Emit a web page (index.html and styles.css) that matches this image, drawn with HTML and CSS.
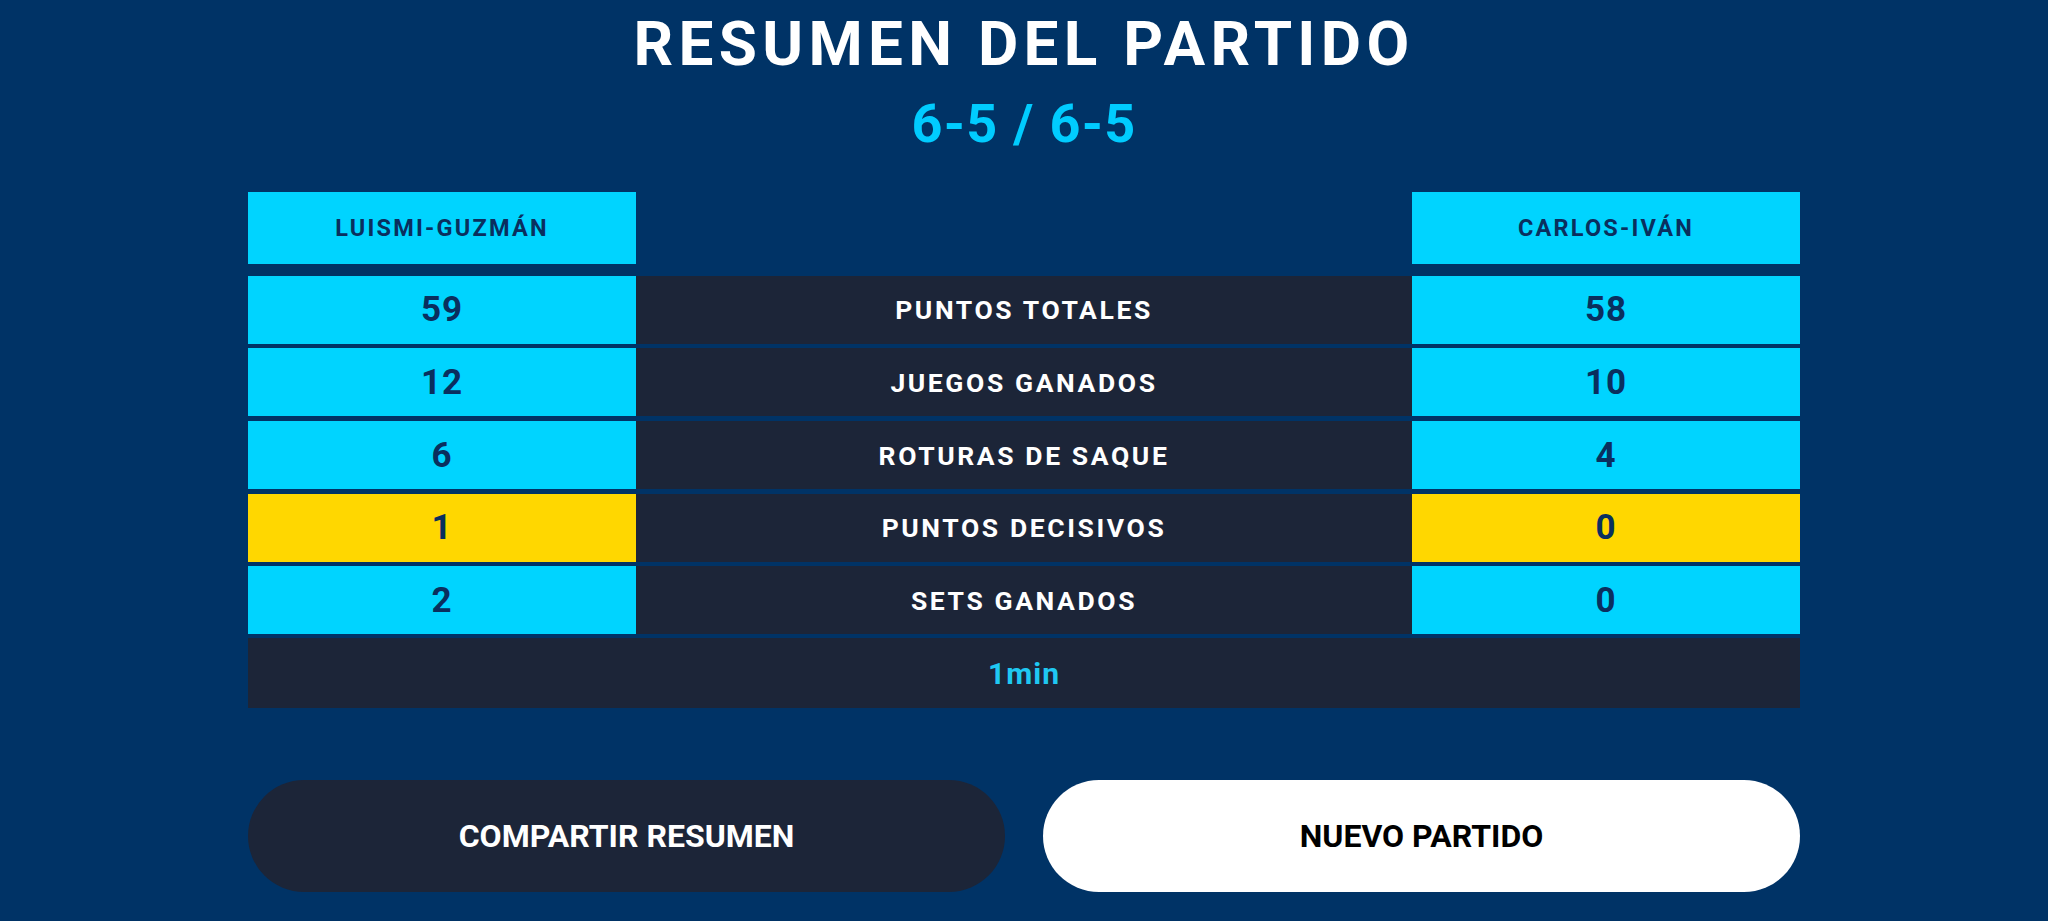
FILE: index.html
```html
<!DOCTYPE html>
<html lang="es">
<head>
<meta charset="utf-8">
<title>Resumen del partido</title>
<link rel="stylesheet" href="styles.css">
</head>
<body>
<main class="page">
  <h1 class="title">RESUMEN DEL PARTIDO</h1>
  <div class="score">6-5 / 6-5</div>

  <section class="table">
    <div class="row row-head">
      <div class="cell side name">LUISMI-GUZMÁN</div>
      <div class="cell blank"></div>
      <div class="cell side name">CARLOS-IVÁN</div>
    </div>
    <div class="rows">
      <div class="row">
        <div class="cell side num">59</div>
        <div class="cell label">PUNTOS TOTALES</div>
        <div class="cell side num">58</div>
      </div>
      <div class="row">
        <div class="cell side num">12</div>
        <div class="cell label">JUEGOS GANADOS</div>
        <div class="cell side num">10</div>
      </div>
      <div class="row">
        <div class="cell side num">6</div>
        <div class="cell label">ROTURAS DE SAQUE</div>
        <div class="cell side num">4</div>
      </div>
      <div class="row">
        <div class="cell side num gold">1</div>
        <div class="cell label">PUNTOS DECISIVOS</div>
        <div class="cell side num gold">0</div>
      </div>
      <div class="row">
        <div class="cell side num">2</div>
        <div class="cell label">SETS GANADOS</div>
        <div class="cell side num">0</div>
      </div>
      <div class="duration">1min</div>
    </div>
  </section>

  <div class="actions">
    <button class="btn btn-dark" type="button">COMPARTIR RESUMEN</button>
    <button class="btn btn-light" type="button">NUEVO PARTIDO</button>
  </div>
</main>
</body>
</html>
```

FILE: styles.css
```css
* { box-sizing: border-box; }

html, body {
  margin: 0;
  padding: 0;
  background: #003366;
}

body {
  font-family: Roboto, "Liberation Sans", Arial, sans-serif;
  width: 2048px;
  height: 921px;
  overflow: hidden;
}

.page {
  width: 1552px;
  margin: 0 auto;
  padding-top: 7px;
  display: flex;
  flex-direction: column;
  align-items: stretch;
}

.title {
  margin: 0;
  font-size: 62px;
  line-height: 74px;
  font-weight: 700;
  letter-spacing: 5.3px;
  color: #ffffff;
  text-align: center;
}

.score {
  margin-top: 10.6px;
  font-size: 54px;
  line-height: 64px;
  font-weight: 700;
  letter-spacing: 1.3px;
  color: #00ccff;
  text-align: center;
}

.table {
  margin-top: 36.8px;
  display: flex;
  flex-direction: column;
}

.rows {
  margin-top: 11.3px;
  display: flex;
  flex-direction: column;
  gap: 4.7px;
}

.row {
  display: grid;
  grid-template-columns: 388px 1fr 388px;
  height: 68px;
}

.row-head {
  height: 72px;
}

.cell {
  display: flex;
  align-items: center;
  justify-content: center;
  font-weight: 700;
}

.side {
  background: #00d4ff;
  color: #0a2f5e;
}

.side.gold {
  background: #ffd700;
}

.blank {
  background: transparent;
}

.name {
  font-size: 23.5px;
  letter-spacing: 2.2px;
}

.num {
  font-size: 35px;
  letter-spacing: 1px;
}

.label {
  background: #1c2538;
  color: #ffffff;
  font-size: 26.5px;
  letter-spacing: 2.6px;
}

.duration {
  height: 70px;
  margin-top: -1px;
  background: #1c2538;
  color: #1fc8f2;
  font-size: 30px;
  font-weight: 700;
  letter-spacing: 1px;
  display: flex;
  align-items: center;
  justify-content: center;
}

.actions {
  margin-top: 72px;
  display: flex;
  gap: 38px;
}

.btn {
  flex: 1 1 0;
  height: 112px;
  border: none;
  border-radius: 56px;
  font-family: Roboto, "Liberation Sans", Arial, sans-serif;
  font-size: 32px;
  font-weight: 700;
  letter-spacing: 0;
  cursor: pointer;
}

.btn-dark {
  background: #1c2538;
  color: #ffffff;
}

.btn-light {
  background: #ffffff;
  color: #000000;
}
```
